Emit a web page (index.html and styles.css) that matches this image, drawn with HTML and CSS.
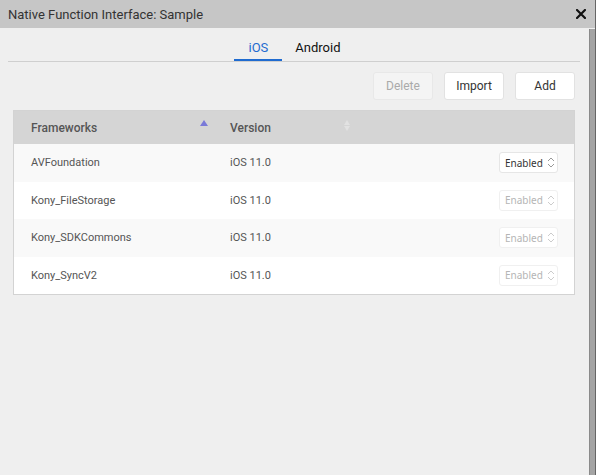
FILE: index.html
```html
<!DOCTYPE html>
<html>
<head>
<meta charset="utf-8">
<link rel="stylesheet" href="styles.css">
</head>
<body>
<div class="window">
  <div class="titlebar">
    <span class="title">Native Function Interface: Sample</span>
    <svg class="close" width="10" height="10" viewBox="0 0 10 10"><path d="M1 1 L9 9 M9 1 L1 9" stroke="#111" stroke-width="2.2" stroke-linecap="square"/></svg>
  </div>
  <div class="main">
    <div class="content">
      <div class="tabs">
        <div class="tab active">iOS</div>
        <div class="tab">Android</div>
      </div>
      <div class="actions">
        <button class="btn disabled">Delete</button>
        <button class="btn">Import</button>
        <button class="btn">Add</button>
      </div>
      <div class="table">
        <div class="row head">
          <div class="c1">Frameworks<span class="sort-up"></span></div>
          <div class="c2">Version<span class="sort-both"><i class="up"></i><i class="down"></i></span></div>
          <div class="c3"></div>
        </div>
        <div class="row odd">
          <div class="c1">AVFoundation</div>
          <div class="c2">iOS 11.0</div>
          <div class="c3"><span class="sel">Enabled<svg width="8" height="11" viewBox="0 0 8 11"><path d="M1 4 L4 1 L7 4 M1 7 L4 10 L7 7" fill="none" stroke="#999" stroke-width="1"/></svg></span></div>
        </div>
        <div class="row">
          <div class="c1">Kony_FileStorage</div>
          <div class="c2">iOS 11.0</div>
          <div class="c3"><span class="sel off">Enabled<svg width="8" height="11" viewBox="0 0 8 11"><path d="M1 4 L4 1 L7 4 M1 7 L4 10 L7 7" fill="none" stroke="#ccc" stroke-width="1"/></svg></span></div>
        </div>
        <div class="row odd">
          <div class="c1">Kony_SDKCommons</div>
          <div class="c2">iOS 11.0</div>
          <div class="c3"><span class="sel off">Enabled<svg width="8" height="11" viewBox="0 0 8 11"><path d="M1 4 L4 1 L7 4 M1 7 L4 10 L7 7" fill="none" stroke="#ccc" stroke-width="1"/></svg></span></div>
        </div>
        <div class="row">
          <div class="c1">Kony_SyncV2</div>
          <div class="c2">iOS 11.0</div>
          <div class="c3"><span class="sel off">Enabled<svg width="8" height="11" viewBox="0 0 8 11"><path d="M1 4 L4 1 L7 4 M1 7 L4 10 L7 7" fill="none" stroke="#ccc" stroke-width="1"/></svg></span></div>
        </div>
      </div>
    </div>
    <div class="scrollbar"></div>
  </div>
</div>
</body>
</html>
```
FILE: styles.css
```css
* { box-sizing: border-box; }
html, body { margin: 0; padding: 0; }
body {
  width: 596px;
  height: 475px;
  overflow: hidden;
  font-family: Roboto, "Liberation Sans", sans-serif;
  background: #efefef;
}
.window {
  width: 596px;
  height: 475px;
  display: flex;
  flex-direction: column;
  border-right: 1px solid #666;
}
.titlebar {
  height: 28px;
  background: #c6c6c6;
  display: flex;
  align-items: center;
  justify-content: space-between;
  padding: 0 9px 0 8px;
  flex: none;
}
.title {
  font-size: 13px;
  color: #333;
}
.close { display: block; }
.main {
  flex: 1;
  display: flex;
}
.content {
  flex: 1;
  padding: 0 14px 0 8px;
}
.scrollbar {
  width: 6px;
  background: #a4a4a4;
  border-left: 1px solid #8a8a8a;
  margin-top: 1px;
}
.tabs {
  display: flex;
  justify-content: center;
  border-bottom: 1px solid #cfcfcf;
  height: 34px;
  padding-top: 12px;
  margin-right: -5px;
}
.tab {
  font-size: 13px;
  color: #111;
  font-weight: 400;
  padding: 0 13px;
  height: 21px;
}
.tab.active {
  color: #1f6bd0;
  border-bottom: 2px solid #1f6bd0;
  padding: 0 14px;
}
.tabs .tab:first-child { margin-left: 0; }
.actions {
  display: flex;
  justify-content: flex-end;
  gap: 11px;
  margin-top: 10px;
}
.btn {
  width: 60px;
  height: 28px;
  border: 1px solid #e2e2e2;
  border-radius: 3px;
  background: #fff;
  font-family: Roboto, "Liberation Sans", sans-serif;
  font-size: 12px;
  color: #333;
  padding: 0;
}
.btn.disabled {
  background: #f4f4f4;
  color: #aaa;
  border-color: #e8e8e8;
}
.table {
  margin: 10px 0 0 5px;
  border: 1px solid #d3d3d3;
  background: #fff;
}
.row {
  display: flex;
  align-items: center;
  height: 37.5px;
  font-size: 11px;
  color: #555;
  background: #fff;
}
.row.odd { background: #f9f9f9; }
.row.head {
  background: #d5d5d5;
  height: 33px;
  font-size: 12px;
  font-weight: 500;
  color: #555;
}
.c1 {
  width: 216px;
  padding-left: 17px;
  position: relative;
}
.c2 {
  width: 140px;
  position: relative;
}
.c3 {
  flex: 1;
  display: flex;
  justify-content: flex-end;
  padding-right: 16px;
}
.sort-up {
  position: absolute;
  left: 186px;
  top: -1px;
  width: 0;
  height: 0;
  border-left: 4px solid transparent;
  border-right: 4px solid transparent;
  border-bottom: 6px solid #7a7ad8;
}
.sort-both {
  position: absolute;
  left: 114px;
  top: -1px;
}
.sort-both i {
  display: block;
  width: 0;
  height: 0;
  border-left: 3px solid transparent;
  border-right: 3px solid transparent;
}
.sort-both .up { border-bottom: 5px solid #e2e2e2; margin-bottom: 1px; }
.sort-both .down { border-top: 5px solid #e2e2e2; }
.sel {
  display: inline-flex;
  align-items: center;
  gap: 4px;
  height: 21px;
  width: 59px;
  padding-left: 5px;
  border: 1px solid #e6e6e6;
  border-radius: 3px;
  background: #fff;
  font-family: "Noto Sans", sans-serif;
  font-size: 10px;
  color: #333;
}
.sel.off {
  color: #b5b5b5;
  border-color: #f0f0f0;
}
```
